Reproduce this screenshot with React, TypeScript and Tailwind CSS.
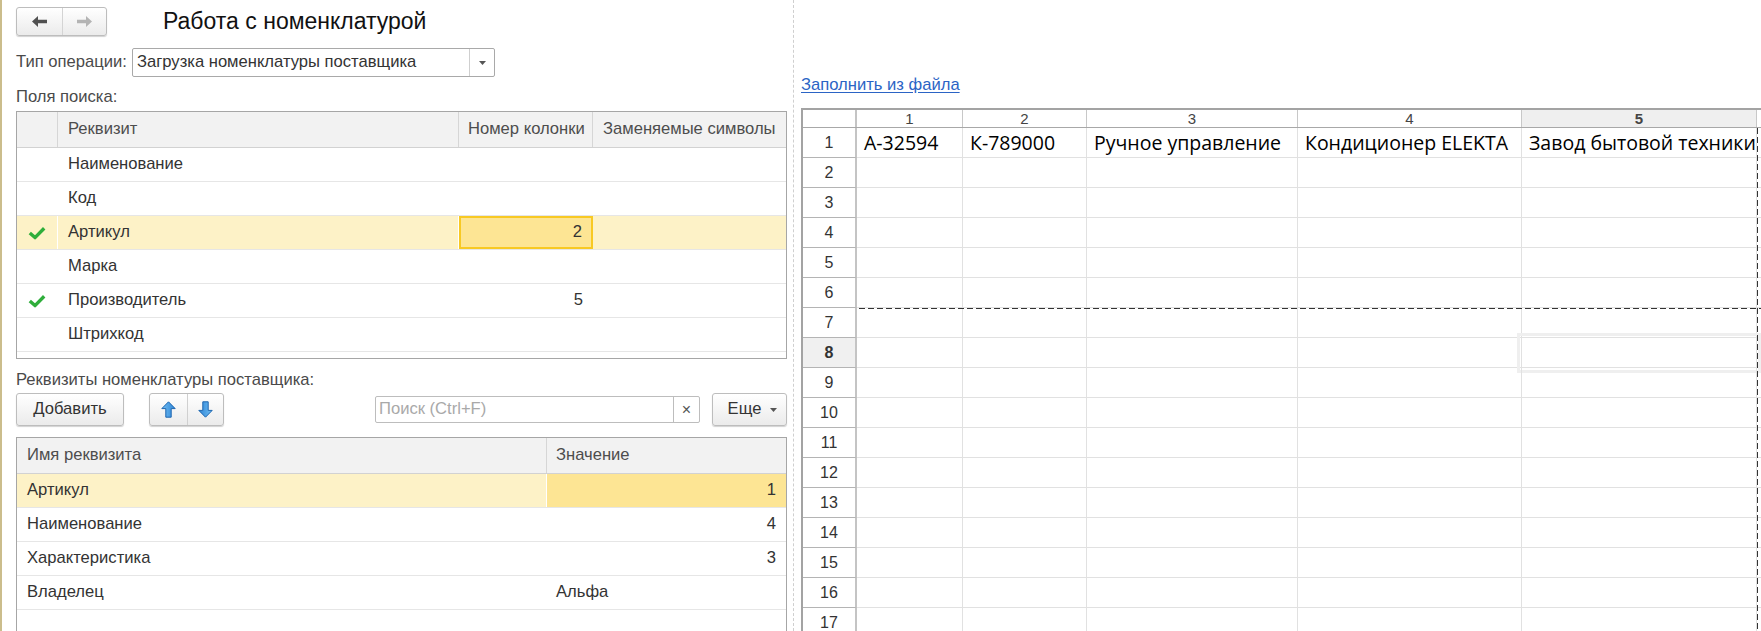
import React from "react";

const Arrow = ({ dir, color }: { dir: "left" | "right"; color: string }) => (
  <svg width="15" height="11" viewBox="0 0 15 11" className={dir === "right" ? "-scale-x-100" : ""}>
    <path d="M0 5.5 L6 0 V3.8 H15 V7.2 H6 V11 Z" fill={color} />
  </svg>
);

const BlueArrow = ({ down }: { down?: boolean }) => (
  <svg width="15" height="17" viewBox="0 0 15 17" className={down ? "rotate-180" : ""}>
    <defs>
      <linearGradient id={down ? "gd" : "gu"} x1="0" y1="0" x2="1" y2="0">
        <stop offset="0" stopColor="#6fbcf2" />
        <stop offset="1" stopColor="#2f86d6" />
      </linearGradient>
    </defs>
    <path
      d="M7.5 0.8 L14.2 7.6 H10.2 V16.2 H4.8 V7.6 H0.8 Z"
      fill={`url(#${down ? "gd" : "gu"})`}
      stroke="#1d66b0"
      strokeWidth="1"
      strokeLinejoin="round"
    />
  </svg>
);

const Check = () => (
  <svg width="18" height="14" viewBox="0 0 18 14">
    <path d="M1.8 7 L7 11.6 L16.2 2.2" fill="none" stroke="#2fae3b" strokeWidth="3.4" strokeLinejoin="round" />
  </svg>
);

const Caret = () => (
  <svg width="7" height="4" viewBox="0 0 7 4">
    <path d="M0 0 H7 L3.5 4 Z" fill="#555" />
  </svg>
);

const btn =
  "bg-linear-to-b from-white to-[#ebebeb] border border-[#bdbdbd] rounded-[3px] shadow-[0_1px_1px_rgba(0,0,0,0.18)]";

const searchRows = [
  { name: "Наименование" },
  { name: "Код" },
  { name: "Артикул", checked: true, num: "2", active: true },
  { name: "Марка" },
  { name: "Производитель", checked: true, num: "5" },
  { name: "Штрихкод" },
];

const attrRows = [
  { name: "Артикул", value: "1", right: true, active: true },
  { name: "Наименование", value: "4", right: true },
  { name: "Характеристика", value: "3", right: true },
  { name: "Владелец", value: "Альфа" },
];

const colWidths = ["w-[106px]", "w-[124px]", "w-[211px]", "w-[224px]", "w-[235px]"];
const rowOne = ["А-32594", "К-789000", "Ручное управление", "Кондиционер ELEKTA", "Завод бытовой техники"];

export default function App() {
  return (
    <div className="w-[1761px] h-[631px] overflow-hidden bg-white flex border-l-2 border-[#cbbd8c] font-['Liberation_Sans',Arial,sans-serif] text-[16.6px] text-[#333]">
      {/* left pane */}
      <div className="w-[791px] shrink-0 pl-[14px] pr-[6px] flex flex-col">
        <div className="mt-[7px] flex items-center">
          <div className={`${btn} flex h-[29px] w-[91px]`}>
            <div className="w-[46px] flex items-center justify-center border-r border-[#d4d4d4]">
              <Arrow dir="left" color="#505050" />
            </div>
            <div className="flex-1 flex items-center justify-center">
              <Arrow dir="right" color="#b4b4b4" />
            </div>
          </div>
          <div className="ml-[56px] text-[23px] text-[#111] leading-[29px]">Работа с номенклатурой</div>
        </div>

        <div className="mt-[12px] flex items-center">
          <span className="w-[116px] text-[#4a4a4a] whitespace-nowrap">Тип операции:</span>
          <div className="w-[363px] h-[29px] border border-[#a9a9a9] rounded-[2px] flex items-center">
            <span className="flex-1 pl-[4px] text-[#333]">Загрузка номенклатуры поставщика</span>
            <div className="w-[25px] h-full border-l border-[#cfcfcf] flex items-center justify-center">
              <Caret />
            </div>
          </div>
        </div>

        <div className="mt-[11px] h-[18px] leading-[18px] text-[#4a4a4a]">Поля поиска:</div>

        <div className="mt-[5px] h-[248px] border border-[#a6a6a6] overflow-hidden">
          <div className="flex h-[36px] bg-[#f2f2f2] border-b border-[#d2d2d2] text-[#4d4d4d]">
            <div className="w-[41px] border-r border-[#d6d6d6]" />
            <div className="w-[401px] border-r border-[#d6d6d6] pl-[10px] flex items-center">Реквизит</div>
            <div className="w-[134px] border-r border-[#d6d6d6] pl-[9px] flex items-center whitespace-nowrap">
              Номер колонки
            </div>
            <div className="flex-1 pl-[10px] flex items-center whitespace-nowrap">Заменяемые символы</div>
          </div>
          {searchRows.map((r) => (
            <div
              key={r.name}
              className={`flex h-[34px] border-b border-[#e6e6e6] ${r.active ? "bg-[#fdf2c7]" : ""}`}
            >
              <div className="w-[41px] border-r border-white flex items-center justify-center">
                {r.checked && <Check />}
              </div>
              <div className="w-[401px] border-r border-white pl-[10px] flex items-center">{r.name}</div>
              <div
                className={`w-[134px] pr-[9px] flex items-center justify-end ${
                  r.active ? "bg-[#fde594] border-2 border-[#f8c923]" : "border-r border-white"
                }`}
              >
                {r.num}
              </div>
              <div className="flex-1" />
            </div>
          ))}
        </div>

        <div className="mt-[12px] h-[18px] leading-[18px] text-[#4a4a4a]">Реквизиты номенклатуры поставщика:</div>

        <div className="mt-[4px] flex items-center h-[33px]">
          <div className={`${btn} w-[108px] h-[33px] flex items-center justify-center text-[#333]`}>Добавить</div>
          <div className={`${btn} ml-[25px] w-[75px] h-[33px] flex`}>
            <div className="w-[38px] border-r border-[#d0d0d0] flex items-center justify-center">
              <BlueArrow />
            </div>
            <div className="flex-1 flex items-center justify-center">
              <BlueArrow down />
            </div>
          </div>
          <div className="ml-[151px] w-[325px] h-[27px] border border-[#bdbdbd] rounded-[2px] flex items-center">
            <span className="flex-1 pl-[3px] text-[#a9a9a9]">Поиск (Ctrl+F)</span>
            <div className="w-[26px] h-full border-l border-[#bdbdbd] flex items-center justify-center text-[#555] text-[16px]">
              ×
            </div>
          </div>
          <div className={`${btn} ml-auto w-[75px] h-[33px] flex items-center justify-center gap-[9px] text-[#333]`}>
            <span className="ml-[6px]">Еще</span>
            <Caret />
          </div>
        </div>

        <div className="mt-[11px] flex-1 border border-b-0 border-[#a6a6a6]">
          <div className="flex h-[36px] bg-[#f2f2f2] border-b border-[#d2d2d2] text-[#4d4d4d]">
            <div className="w-[530px] border-r border-[#d6d6d6] pl-[10px] flex items-center">Имя реквизита</div>
            <div className="flex-1 pl-[9px] flex items-center">Значение</div>
          </div>
          {attrRows.map((r) => (
            <div key={r.name} className="flex h-[34px] border-b border-[#e6e6e6]">
              <div
                className={`w-[530px] border-r border-white pl-[10px] flex items-center ${
                  r.active ? "bg-[#fdf2c7]" : ""
                }`}
              >
                {r.name}
              </div>
              <div
                className={`flex-1 flex items-center ${r.right ? "justify-end pr-[10px]" : "pl-[9px]"} ${
                  r.active ? "bg-[#fde594]" : ""
                }`}
              >
                {r.value}
              </div>
            </div>
          ))}
        </div>
      </div>

      {/* right pane */}
      <div className="flex-1 border-l border-dashed border-[#cfcfcf] pl-[7px] pt-[76px] flex flex-col">
        <div className="h-[18px] leading-[18px]">
          <span className="text-[#2b64c5] underline underline-offset-2">Заполнить из файла</span>
        </div>

        <div className="mt-[14px] relative flex-1 border-l-2 border-t-2 border-[#a3a3a3] overflow-hidden">
          <div className="flex h-[18px] border-b border-[#a8a8a8] text-[15px] text-[#444] leading-[17px]">
            <div className="w-[54px] border-r-2 border-[#c4c4c4]" />
            {colWidths.map((w, i) => (
              <div
                key={i}
                className={`${w} border-r border-[#c8c8c8] text-center ${
                  i === 4 ? "bg-[#efefef] font-bold" : ""
                }`}
              >
                {i + 1}
              </div>
            ))}
            <div className="flex-1" />
          </div>

          {Array.from({ length: 17 }, (_, r) => (
            <div key={r} className="flex h-[30px]">
              <div
                className={`w-[54px] border-r-2 border-b border-r-[#c4c4c4] border-b-[#b4b4b4] flex items-center justify-center text-[16px] ${
                  r === 7 ? "bg-[#f0f0f0] font-bold" : "bg-white"
                }`}
              >
                {r + 1}
              </div>
              {colWidths.map((w, i) => (
                <div
                  key={i}
                  className={`${w} relative border-r border-b border-[#e1e1e1] flex items-center pl-[7px] font-['Open_Sans',sans-serif] text-[19.5px] text-black whitespace-nowrap`}
                >
                  {r === 0 ? rowOne[i] : ""}
                  {r === 7 && i === 4 && (
                    <div className="absolute -top-[5px] -left-[5px] -right-[5px] -bottom-[6px] border-[3px] border-[#efefef]" />
                  )}
                </div>
              ))}
              <div className="flex-1 border-b border-[#e1e1e1]" />
            </div>
          ))}

          {/* page break markers */}
          <div className="absolute left-[56px] right-0 top-[198px] h-px bg-[repeating-linear-gradient(90deg,#333_0_6px,transparent_6px_9px)]" />
          <div className="absolute left-[954px] top-[18px] bottom-0 w-px bg-[repeating-linear-gradient(180deg,#333_0_6px,transparent_6px_9px)]" />
        </div>
      </div>
    </div>
  );
}
